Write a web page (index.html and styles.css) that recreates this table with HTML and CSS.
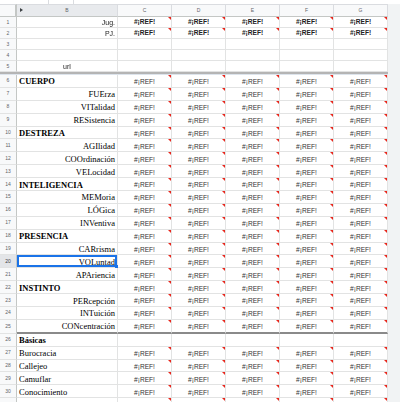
FILE: index.html
```html
<!DOCTYPE html>
<html lang="es">
<head>
<meta charset="utf-8">
<title>Hoja</title>
<link rel="stylesheet" href="styles.css">
</head>
<body>
<div class="top"><div class="tab"></div></div>
<div class="sheet">
  <div class="row head">
    <div class="corner"></div>
    <div class="ch chsel"><span class="arrow"></span>B</div>
    <div class="ch">C</div><div class="ch">D</div><div class="ch">E</div><div class="ch">F</div><div class="ch">G</div>
    <div class="g"></div>
  </div>

  <div class="row rs bold">
    <div class="n">1</div><div class="sans r">Jug.</div>
    <div class="e">#¡REF!</div><div class="e">#¡REF!</div><div class="e">#¡REF!</div><div class="e">#¡REF!</div><div class="e">#¡REF!</div><div class="g"></div>
  </div>
  <div class="row rs bold">
    <div class="n">2</div><div class="sans r">PJ.</div>
    <div class="e">#¡REF!</div><div class="e">#¡REF!</div><div class="e">#¡REF!</div><div class="e">#¡REF!</div><div class="e">#¡REF!</div><div class="g"></div>
  </div>
  <div class="row rs">
    <div class="n">3</div><div></div><div></div><div></div><div></div><div></div><div></div><div class="g"></div>
  </div>
  <div class="row rs">
    <div class="n">4</div><div></div><div></div><div></div><div></div><div></div><div></div><div class="g"></div>
  </div>
  <div class="row rs">
    <div class="n">5</div><div class="sans ctr">url</div><div></div><div></div><div></div><div></div><div></div><div class="g"></div>
  </div>

  <div class="row freeze"><div class="fl"></div><div class="g"></div></div>

  <div class="row rl">
    <div class="n">6</div><div class="ser b">CUERPO</div>
    <div class="e">#¡REF!</div><div class="e">#¡REF!</div><div class="e">#¡REF!</div><div class="e">#¡REF!</div><div class="e">#¡REF!</div><div class="g"></div>
  </div>
  <div class="row rl">
    <div class="n">7</div><div class="ser r">FUErza</div>
    <div class="e">#¡REF!</div><div class="e">#¡REF!</div><div class="e">#¡REF!</div><div class="e">#¡REF!</div><div class="e">#¡REF!</div><div class="g"></div>
  </div>
  <div class="row rl">
    <div class="n">8</div><div class="ser r">VITalidad</div>
    <div class="e">#¡REF!</div><div class="e">#¡REF!</div><div class="e">#¡REF!</div><div class="e">#¡REF!</div><div class="e">#¡REF!</div><div class="g"></div>
  </div>
  <div class="row rl">
    <div class="n">9</div><div class="ser r">RESistencia</div>
    <div class="e">#¡REF!</div><div class="e">#¡REF!</div><div class="e">#¡REF!</div><div class="e">#¡REF!</div><div class="e">#¡REF!</div><div class="g"></div>
  </div>
  <div class="row rl">
    <div class="n">10</div><div class="ser b">DESTREZA</div>
    <div class="e">#¡REF!</div><div class="e">#¡REF!</div><div class="e">#¡REF!</div><div class="e">#¡REF!</div><div class="e">#¡REF!</div><div class="g"></div>
  </div>
  <div class="row rl">
    <div class="n">11</div><div class="ser r">AGIlidad</div>
    <div class="e">#¡REF!</div><div class="e">#¡REF!</div><div class="e">#¡REF!</div><div class="e">#¡REF!</div><div class="e">#¡REF!</div><div class="g"></div>
  </div>
  <div class="row rl">
    <div class="n">12</div><div class="ser r">COOrdinación</div>
    <div class="e">#¡REF!</div><div class="e">#¡REF!</div><div class="e">#¡REF!</div><div class="e">#¡REF!</div><div class="e">#¡REF!</div><div class="g"></div>
  </div>
  <div class="row rl">
    <div class="n">13</div><div class="ser r">VELocidad</div>
    <div class="e">#¡REF!</div><div class="e">#¡REF!</div><div class="e">#¡REF!</div><div class="e">#¡REF!</div><div class="e">#¡REF!</div><div class="g"></div>
  </div>
  <div class="row rl">
    <div class="n">14</div><div class="ser b">INTELIGENCIA</div>
    <div class="e">#¡REF!</div><div class="e">#¡REF!</div><div class="e">#¡REF!</div><div class="e">#¡REF!</div><div class="e">#¡REF!</div><div class="g"></div>
  </div>
  <div class="row rl">
    <div class="n">15</div><div class="ser r">MEMoria</div>
    <div class="e">#¡REF!</div><div class="e">#¡REF!</div><div class="e">#¡REF!</div><div class="e">#¡REF!</div><div class="e">#¡REF!</div><div class="g"></div>
  </div>
  <div class="row rl">
    <div class="n">16</div><div class="ser r">LÓGica</div>
    <div class="e">#¡REF!</div><div class="e">#¡REF!</div><div class="e">#¡REF!</div><div class="e">#¡REF!</div><div class="e">#¡REF!</div><div class="g"></div>
  </div>
  <div class="row rl">
    <div class="n">17</div><div class="ser r">INVentiva</div>
    <div class="e">#¡REF!</div><div class="e">#¡REF!</div><div class="e">#¡REF!</div><div class="e">#¡REF!</div><div class="e">#¡REF!</div><div class="g"></div>
  </div>
  <div class="row rl">
    <div class="n">18</div><div class="ser b">PRESENCIA</div>
    <div class="e">#¡REF!</div><div class="e">#¡REF!</div><div class="e">#¡REF!</div><div class="e">#¡REF!</div><div class="e">#¡REF!</div><div class="g"></div>
  </div>
  <div class="row rl">
    <div class="n">19</div><div class="ser r">CARrisma</div>
    <div class="e">#¡REF!</div><div class="e">#¡REF!</div><div class="e">#¡REF!</div><div class="e">#¡REF!</div><div class="e">#¡REF!</div><div class="g"></div>
  </div>
  <div class="row rl">
    <div class="n nsel">20</div><div class="ser r sel">VOLuntad</div>
    <div class="e">#¡REF!</div><div class="e">#¡REF!</div><div class="e">#¡REF!</div><div class="e">#¡REF!</div><div class="e">#¡REF!</div><div class="g"></div>
  </div>
  <div class="row rl">
    <div class="n">21</div><div class="ser r">APAriencia</div>
    <div class="e">#¡REF!</div><div class="e">#¡REF!</div><div class="e">#¡REF!</div><div class="e">#¡REF!</div><div class="e">#¡REF!</div><div class="g"></div>
  </div>
  <div class="row rl">
    <div class="n">22</div><div class="ser b">INSTINTO</div>
    <div class="e">#¡REF!</div><div class="e">#¡REF!</div><div class="e">#¡REF!</div><div class="e">#¡REF!</div><div class="e">#¡REF!</div><div class="g"></div>
  </div>
  <div class="row rl">
    <div class="n">23</div><div class="ser r">PERcepción</div>
    <div class="e">#¡REF!</div><div class="e">#¡REF!</div><div class="e">#¡REF!</div><div class="e">#¡REF!</div><div class="e">#¡REF!</div><div class="g"></div>
  </div>
  <div class="row rl">
    <div class="n">24</div><div class="ser r">INTuición</div>
    <div class="e">#¡REF!</div><div class="e">#¡REF!</div><div class="e">#¡REF!</div><div class="e">#¡REF!</div><div class="e">#¡REF!</div><div class="g"></div>
  </div>
  <div class="row rl thick">
    <div class="n">25</div><div class="ser r">CONcentración</div>
    <div class="e">#¡REF!</div><div class="e">#¡REF!</div><div class="e">#¡REF!</div><div class="e">#¡REF!</div><div class="e">#¡REF!</div><div class="g"></div>
  </div>
  <div class="row rl">
    <div class="n">26</div><div class="ser b">Básicas</div><div></div><div></div><div></div><div></div><div></div><div class="g"></div>
  </div>
  <div class="row rl">
    <div class="n">27</div><div class="ser">Burocracia</div>
    <div class="e">#¡REF!</div><div class="e">#¡REF!</div><div class="e">#¡REF!</div><div class="e">#¡REF!</div><div class="e">#¡REF!</div><div class="g"></div>
  </div>
  <div class="row rl">
    <div class="n">28</div><div class="ser">Callejeo</div>
    <div class="e">#¡REF!</div><div class="e">#¡REF!</div><div class="e">#¡REF!</div><div class="e">#¡REF!</div><div class="e">#¡REF!</div><div class="g"></div>
  </div>
  <div class="row rl">
    <div class="n">29</div><div class="ser">Camuflar</div>
    <div class="e">#¡REF!</div><div class="e">#¡REF!</div><div class="e">#¡REF!</div><div class="e">#¡REF!</div><div class="e">#¡REF!</div><div class="g"></div>
  </div>
  <div class="row rl">
    <div class="n">30</div><div class="ser">Conocimiento</div>
    <div class="e">#¡REF!</div><div class="e">#¡REF!</div><div class="e">#¡REF!</div><div class="e">#¡REF!</div><div class="e">#¡REF!</div><div class="g"></div>
  </div>
  <div class="row rl">
    <div class="n">31</div><div class="ser">Descubrir</div>
    <div class="e">#¡REF!</div><div class="e">#¡REF!</div><div class="e">#¡REF!</div><div class="e">#¡REF!</div><div class="e">#¡REF!</div><div class="g"></div>
  </div>
</div>
</body>
</html>
```
FILE: styles.css
```css
html, body {
  margin: 0;
  padding: 0;
  background: #ffffff;
}
body {
  width: 400px;
  height: 402px;
  overflow: hidden;
  font-family: "Liberation Sans", Arial, sans-serif;
}

.top {
  height: 4px;
  display: flex;
  background: #ffffff;
}
.top .tab {
  margin-left: 48px;
  width: 26px;
  border-left: 1px solid #dadce0;
  border-right: 1px solid #dadce0;
  box-sizing: border-box;
}

.row {
  display: grid;
  grid-template-columns: 17px 101px repeat(5, 54px) 12px;
}
.head { height: 13px; }
.rs { height: 11px; }
.rl { height: 12.9px; }
.rl.thick { height: 13.9px; }

.row > div {
  box-sizing: border-box;
  border-right: 1px solid #e2e3e3;
  border-bottom: 1px solid #e2e3e3;
  display: flex;
  align-items: flex-end;
  padding: 0 2px 1px;
  line-height: 1;
  position: relative;
  min-width: 0;
  white-space: nowrap;
  color: #000000;
}

/* header row */
.head > div {
  background: #f8f9fa;
  border-top: 1px solid #dadce0;
  border-right: 1px solid #dadce0;
  border-bottom: 1px solid #c4c7c5;
  justify-content: center;
  align-items: center;
  padding: 0;
  font-size: 5px;
  color: #5f6368;
}
.head > .chsel { background: #e8eaed; }
.head > .corner { border-right: 2px solid #c4c7c5; }
.arrow {
  position: absolute;
  left: 3px;
  top: 3px;
  width: 0;
  height: 0;
  border-top: 2px solid transparent;
  border-bottom: 2px solid transparent;
  border-left: 3px solid #3c4043;
}

/* row numbers */
.row > .n {
  background: #f8f9fa;
  border-right: 1px solid #c4c7c5;
  border-bottom: 1px solid #e2e3e3;
  justify-content: center;
  align-items: center;
  padding: 0;
  font-size: 5px;
  color: #5f6368;
}
.row > .nsel { background: #e3e5e8; color: #3c4043; }

/* gutter */
.row > .g {
  background: #f1f3f4;
  border: none;
  padding: 0;
}

/* freeze divider */
.row.freeze { height: 3px; }
.freeze > .fl {
  grid-column: 1 / 8;
  border: none;
  padding: 0;
  background: linear-gradient(#b4b4b4 0, #b4b4b4 2px, #dde4ec 2px, #dde4ec 3px);
}

/* thick border under row 25 */
.thick > div:not(.n):not(.g) {
  border-bottom: 2px solid #8a8a8a;
}

/* text */
.sans {
  font-size: 7px;
  font-family: "Liberation Sans", Arial, sans-serif;
}
.row > .sans { color: #222222; filter: grayscale(1); }
.ser { font-family: "Liberation Serif", "Times New Roman", serif; font-size: 8.5px; }
.b { font-weight: bold; }
.row > .r { justify-content: flex-end; }
.row > .ctr { justify-content: center; }

.row > .e {
  justify-content: center;
  font-size: 6.6px;
  color: #333333;
}
.bold > .e { font-weight: bold; color: #222222; }
.e::after {
  content: "";
  position: absolute;
  top: 0;
  right: 0;
  width: 0;
  height: 0;
  border-top: 3px solid #e8261c;
  border-left: 3px solid transparent;
}

/* selection */
.sel::before {
  content: "";
  position: absolute;
  left: 0;
  top: 0;
  right: 0;
  bottom: 0;
  border: 2px solid #1a73e8;
  box-sizing: border-box;
  z-index: 2;
}
.sel::after {
  content: "";
  position: absolute;
  right: -1px;
  bottom: -1px;
  width: 3px;
  height: 3px;
  background: #1a73e8;
  z-index: 3;
}
```
